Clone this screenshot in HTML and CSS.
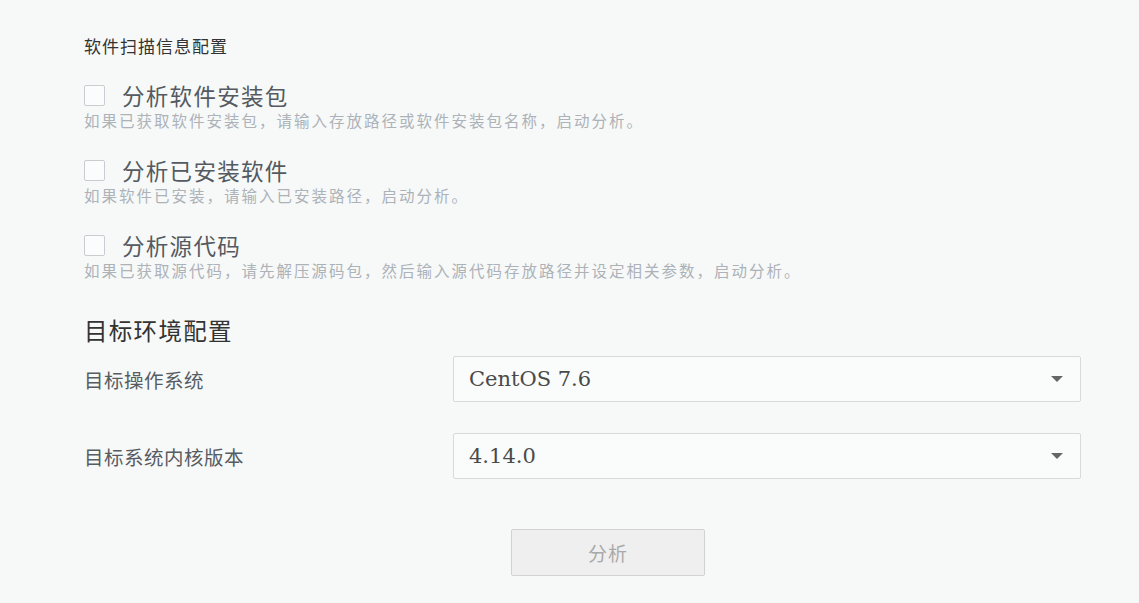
FILE: index.html
```html
<!DOCTYPE html>
<html lang="zh-CN">
<head>
    <meta charset="UTF-8">
    <meta name="viewport" content="width=device-width, initial-scale=1.0">
    <title>软件扫描信息配置</title>
    <link rel="stylesheet" href="styles.css">
</head>
<body>
    <div class="config-page">
        <h3 class="scan-title">软件扫描信息配置</h3>

        <div class="scan-option first">
            <label class="option-label">
                <span class="check-box"></span>
                <span class="option-name">分析软件安装包</span>
            </label>
            <p class="option-desc">如果已获取软件安装包，请输入存放路径或软件安装包名称，启动分析。</p>
        </div>

        <div class="scan-option">
            <label class="option-label">
                <span class="check-box"></span>
                <span class="option-name">分析已安装软件</span>
            </label>
            <p class="option-desc">如果软件已安装，请输入已安装路径，启动分析。</p>
        </div>

        <div class="scan-option">
            <label class="option-label">
                <span class="check-box"></span>
                <span class="option-name">分析源代码</span>
            </label>
            <p class="option-desc">如果已获取源代码，请先解压源码包，然后输入源代码存放路径并设定相关参数，启动分析。</p>
        </div>

        <h3 class="env-title">目标环境配置</h3>

        <div class="form-row first">
            <span class="field-label">目标操作系统</span>
            <div class="select-box">
                <span class="select-value">CentOS 7.6</span>
                <span class="select-arrow"></span>
            </div>
        </div>

        <div class="form-row">
            <span class="field-label">目标系统内核版本</span>
            <div class="select-box">
                <span class="select-value">4.14.0</span>
                <span class="select-arrow"></span>
            </div>
        </div>

        <div class="actions">
            <button class="analyze-button" disabled>分析</button>
        </div>
    </div>
</body>
</html>
```

FILE: styles.css
```css
* {
    margin: 0;
    padding: 0;
    box-sizing: border-box;
}
body {
    background-color: #f6f9f8;
    font-family: 'Noto Sans CJK SC', 'Noto Sans', sans-serif;
    width: 1139px;
    height: 603px;
    overflow: hidden;
}
.config-page {
    padding: 34px 7px 0 84px;
}
.scan-title {
    font-size: 17px;
    font-weight: normal;
    letter-spacing: 1px;
    line-height: 24px;
    color: #333;
}
.scan-option {
    margin-top: 25px;
}
.scan-option.first {
    margin-top: 22px;
}
.option-label {
    display: flex;
    align-items: center;
    height: 30px;
}
.check-box {
    width: 21px;
    height: 21px;
    border: 1px solid #c9cdd1;
    border-radius: 2px;
    background-color: #fbfcfc;
    margin-right: 17px;
    flex-shrink: 0;
}
.option-name {
    font-size: 22.5px;
    letter-spacing: 1.3px;
    line-height: 30px;
    color: #555a61;
}
.option-desc {
    font-size: 15.5px;
    letter-spacing: 2px;
    line-height: 20px;
    color: #adb2b9;
}
.env-title {
    margin-top: 35px;
    font-size: 23.5px;
    font-weight: normal;
    letter-spacing: 1.3px;
    line-height: 30px;
    color: #333;
}
.form-row {
    display: flex;
    align-items: center;
    margin-top: 31px;
}
.form-row.first {
    margin-top: 11px;
}
.field-label {
    width: 369px;
    font-size: 19.5px;
    letter-spacing: 0.5px;
    color: #575c62;
}
.select-box {
    width: 628px;
    height: 46px;
    display: flex;
    align-items: center;
    justify-content: space-between;
    padding: 0 17px 0 15px;
    background-color: #fafcfb;
    border: 1px solid #d6dadb;
    border-radius: 2px;
}
.select-value {
    font-family: 'DejaVu Serif', serif;
    font-size: 21px;
    color: #4a4a4a;
}
.select-arrow {
    width: 0;
    height: 0;
    border-left: 6px solid transparent;
    border-right: 6px solid transparent;
    border-top: 6px solid #666;
}
.actions {
    display: flex;
    justify-content: center;
    margin-top: 50px;
}
.analyze-button {
    width: 194px;
    height: 47px;
    background-color: #efefef;
    border: 1px solid #d2d2d2;
    border-radius: 2px;
    font-family: 'Noto Sans CJK SC', sans-serif;
    font-size: 19px;
    letter-spacing: 1px;
    color: #a9a9a9;
}
```
